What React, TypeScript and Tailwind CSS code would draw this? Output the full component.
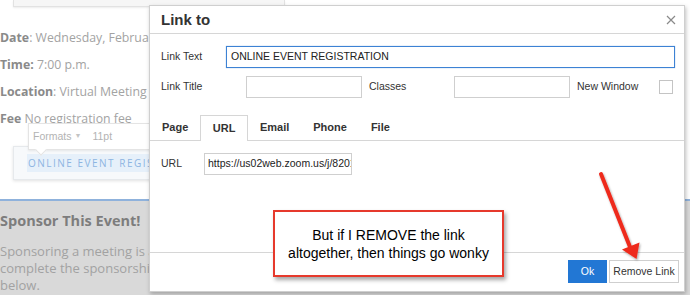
import React from "react";

export default function App() {
  const sans = { fontFamily: '"Liberation Sans", Arial, sans-serif' };
  return (
    <div
      className="relative w-[690px] h-[295px] overflow-hidden bg-white"
      style={{ fontFamily: '"Open Sans", sans-serif' }}
    >
      {/* background page */}
      <div className="flex flex-col h-full">
        <div className="ml-[13px] w-[272px] h-[7px] bg-[#f6f6f6] border-b border-r border-l border-[#e2e2e2] shadow-[0_1px_2px_rgba(0,0,0,0.08)]" />
        <div className="mt-[17px] text-[12.3px] leading-[27px] text-[#a3a3a3] whitespace-nowrap">
          <div>
            <span className="font-bold text-[#8a8a8a]">Date</span>: Wednesday, February 17
          </div>
          <div>
            <span className="font-bold text-[#8a8a8a]">Time:</span> 7:00 p.m.
          </div>
          <div>
            <span className="font-bold text-[#8a8a8a]">Location</span>: Virtual Meeting
          </div>
          <div>
            <span className="font-bold text-[#8a8a8a]">Fee</span> No registration fee
          </div>
        </div>
        <div className="ml-[13px] mt-[14px] w-[300px] h-[34px] bg-[#f7f9fb] border border-[#e6e9ec] shadow-[0_1px_3px_rgba(0,0,0,0.12)] flex items-center pl-[13px]">
          <span className="bg-[#e6f0fa] text-[#8db5e2] text-[10px] tracking-[1.5px] leading-[18px] px-[1px]">
            ONLINE EVENT REGISTRATION
          </span>
        </div>
        <div className="mt-[19px] flex-1 bg-[#d9d9d9] border-t-2 border-[#8fb2dc] whitespace-nowrap">
          <div className="mt-[8px] text-[14.5px] font-bold text-[#7d7d7d] leading-[24px]">Sponsor This Event!</div>
          <div className="mt-[10px] text-[13px] text-[#a2a2a2] leading-[17px]">
            <div>Sponsoring a meeting is a great way</div>
            <div>complete the sponsorship form</div>
            <div>below.</div>
          </div>
        </div>
      </div>

      {/* inline toolbar */}
      <div className="absolute left-[28px] top-[123px] w-[200px] h-[27px] bg-white border border-[#e4e4e4] shadow-[0_1px_2px_rgba(0,0,0,0.08)] flex items-center text-[10.5px] text-[#b3b3b3]" style={sans}>
        <span className="ml-[4px]">Formats</span>
        <span className="ml-[3px] text-[7px] text-[#c4c4c4]">▼</span>
        <span className="ml-[11px]">11pt</span>
        <div className="absolute left-[8px] -bottom-[5px] w-[8px] h-[8px] bg-white border-r border-b border-[#e4e4e4] rotate-45" />
      </div>

      {/* modal */}
      <div
        className="absolute left-[149px] top-[5px] w-[536px] h-[287px] bg-white border border-[#cfcfcf] shadow-[1px_2px_4px_rgba(0,0,0,0.25)] flex flex-col text-[#333]"
        style={sans}
      >
        <div className="h-[28px] border-b border-[#d6d6d6] flex items-center justify-between pl-[11px] pr-[8px] shrink-0">
          <span className="text-[15px] font-bold text-[#333] leading-none">Link to</span>
          <svg width="10" height="10" viewBox="0 0 10 10">
            <path d="M1 1 L9 9 M9 1 L1 9" stroke="#8a8a8a" strokeWidth="1.2" fill="none" />
          </svg>
        </div>
        <div className="flex-1 flex flex-col text-[10.5px]">
          <div className="mt-[12px] pl-[11px] pr-[9px] flex items-center h-[22px]">
            <span className="w-[65px] shrink-0">Link Text</span>
            <div className="flex-1 h-[22px] border border-[#3d82d4] shadow-[0_0_1px_rgba(61,130,212,0.6)] flex items-center pl-[4px] text-[#222]">
              ONLINE EVENT REGISTRATION
            </div>
          </div>
          <div className="mt-[8px] pl-[11px] pr-[11px] flex items-center h-[22px]">
            <span className="w-[85px] shrink-0">Link Title</span>
            <div className="w-[116px] h-[22px] border border-[#cfcfcf] shrink-0" />
            <span className="ml-[7px] w-[85px] shrink-0">Classes</span>
            <div className="w-[116px] h-[22px] border border-[#cfcfcf] shrink-0" />
            <span className="ml-[7px]">New Window</span>
            <div className="ml-auto w-[14px] h-[14px] border border-[#c4c4c4]" />
          </div>
          <div className="mt-[18px] h-[25px] border-b border-[#d6d6d6] flex items-end text-[11px] font-bold text-[#333]">
            <div className="px-[12px] h-[25px] flex items-center">Page</div>
            <div className="px-[11.5px] h-[26px] -mb-px flex items-center bg-white border-l border-t border-r border-[#d6d6d6]">URL</div>
            <div className="px-[12px] h-[25px] flex items-center">Email</div>
            <div className="px-[12px] h-[25px] flex items-center">Phone</div>
            <div className="px-[12px] h-[25px] flex items-center">File</div>
          </div>
          <div className="mt-[12px] pl-[11px] flex items-center h-[22px]">
            <span className="w-[43px] shrink-0">URL</span>
            <div className="w-[148px] h-[22px] border border-[#cfcfcf] flex items-center pl-[3px] overflow-hidden whitespace-nowrap text-[10.5px] text-[#222]">
              https://us02web.zoom.us/j/82012345678
            </div>
          </div>
        </div>
        <div className="h-[39px] border-t border-[#d6d6d6] flex items-start justify-end pt-[7px] pr-[5px] gap-[2px] shrink-0 text-[10.5px]">
          <div className="w-[39px] h-[23px] bg-[#2277d4] text-white flex items-center justify-center">Ok</div>
          <div className="w-[70px] h-[23px] bg-white border border-[#cfcfcf] text-[#333] flex items-center justify-center">Remove Link</div>
        </div>
      </div>

      {/* annotation */}
      <div
        className="absolute left-[273px] top-[210px] w-[231px] h-[67px] bg-white border-2 border-[#e6392c] shadow-[2px_3px_4px_rgba(0,0,0,0.35)] flex flex-col items-center justify-center text-[14px] leading-[18px] text-black"
        style={sans}
      >
        <div>But if I REMOVE the link</div>
        <div>altogether, then things go wonky</div>
      </div>

      {/* arrow */}
      <svg className="absolute left-0 top-0 pointer-events-none" width="690" height="295" viewBox="0 0 690 295">
        <defs>
          <filter id="sh" x="-20%" y="-20%" width="140%" height="140%">
            <feDropShadow dx="1" dy="1.5" stdDeviation="1" floodColor="#000" floodOpacity="0.35" />
          </filter>
        </defs>
        <g filter="url(#sh)">
          <line x1="601" y1="174" x2="630" y2="247" stroke="#ee2b1c" strokeWidth="4" strokeLinecap="round" />
          <polygon points="622,249.5 639.5,242.5 636.5,259" fill="#ee2b1c" />
        </g>
      </svg>
    </div>
  );
}
